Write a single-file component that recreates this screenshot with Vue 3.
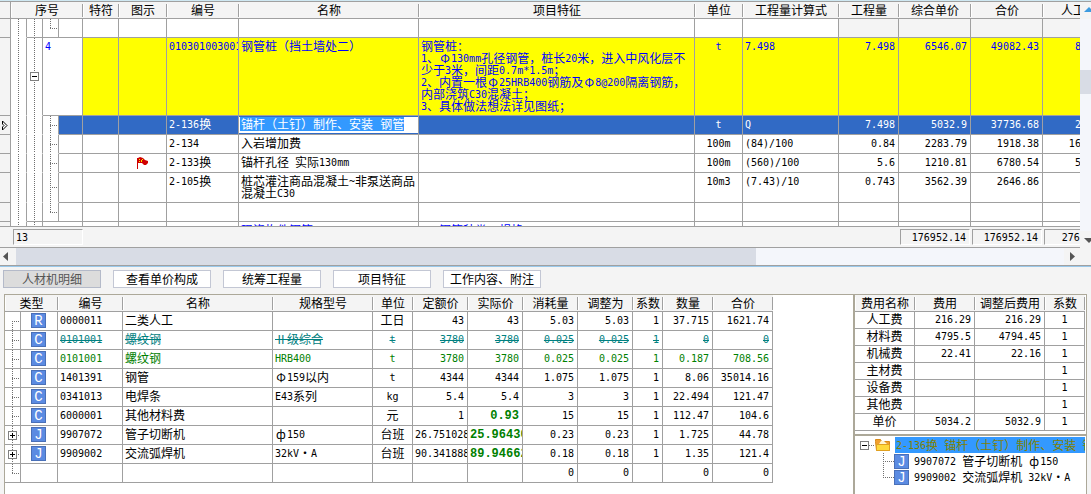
<script setup>
import { h } from 'vue'

/* Latin runs take a half-width face, symbols take a full-width cell. */
const Txt = (props) =>
  (String(props.t).match(/[\x20-\x7e]+|[ΦфⅡ·]|[^\x20-\x7eΦфⅡ·]+/g) || []).map((run) => {
    if (/^[ΦфⅡ·]$/.test(run)) return h('span', { class: 'run-wide' }, run)
    if (/^[\x20-\x7e]/.test(run)) return h('span', { class: 'run-half' }, run)
    return h('span', { class: 'run' }, run)
  })
Txt.props = ['t']

const Badge = (props) => h('span', { class: 'badge' }, props.t)
Badge.props = ['t']

const topCols = [11, 16, 16, 16, 24, 36, 48, 72, 180, 276, 48, 96, 60, 72, 72, 72]
const topHeads = ['特符', '图示', '编号', '名称', '项目特征', '单位', '工程量计算式', '工程量', '综合单价', '合价', '人工费']

const feature = [
  '钢管桩：',
  '1、Φ130mm孔径钢管，桩长20米，进入中风化层不',
  '少于3米，间距0.7m*1.5m；',
  '2、内置一根Φ25HRB400钢筋及Φ8@200隔离钢筋，',
  '内部浇筑C30混凝土；',
  '3、具体做法想法详见图纸；',
]

const rows = [
  { kind: 'blank', branch: 'last', endT2: true, endT3: true, name: [], feat: [] },
  { kind: 'group', no: '4', code: '010301003001', name: ['钢管桩（挡土墙处二）'], feat: feature, unit: 't', calc: '7.498', v: ['7.498', '6546.07', '49082.43', '882.43'] },
  { kind: 'sel', branch: 'mid', code: '2-136换', edit: '锚杆（土钉）制作、安装 钢管', name: [], feat: [], unit: 't', calc: 'Q', v: ['7.498', '5032.9', '37736.68', '216.29'] },
  { branch: 'mid', code: '2-134', name: ['入岩增加费'], feat: [], unit: '100m', calc: '(84)/100', v: ['0.84', '2283.79', '1918.38', '1616.29'] },
  { branch: 'mid', flag: true, code: '2-133换', name: ['锚杆孔径 实际130mm'], feat: [], unit: '100m', calc: '(560)/100', v: ['5.6', '1210.81', '6780.54', '516.29'] },
  { branch: 'mid', code: '2-105换', name: ['桩芯灌注商品混凝土~非泵送商品', '混凝土C30'], feat: [], unit: '10m3', calc: '(7.43)/10', v: ['0.743', '3562.39', '2646.86', ''] },
  { branch: 'last', endT2: true, endT3: true, name: [], feat: [] },
  { kind: 'next', name: ['现浇构件钢筋'], feat: ['1、钢筋种类、规格'] },
]

const tabs = ['人材机明细', '查看单价构成', '统筹工程量', '项目特征', '工作内容、附注']

const resCols = [15, 1, 37, 65, 150, 100, 40, 55, 55, 55, 55, 30, 50, 60]
const resHeads = ['编号', '名称', '规格型号', '单位', '定额价', '实际价', '消耗量', '调整为', '系数', '数量', '合价']
const resources = [
  { b: 'first', k: 'R', code: '0000011', name: '二类人工', spec: '', unit: '工日', v: ['43', '43', '5.03', '5.03', '1', '37.715', '1621.74'] },
  { b: 'mid', k: 'C', code: '0101001', name: '螺纹钢', spec: 'Ⅱ级综合', unit: 't', v: ['3780', '3780', '0.025', '0.025', '1', '0', '0'], cls: 'struck' },
  { b: 'mid', k: 'C', code: '0101001', name: '螺纹钢', spec: 'HRB400', unit: 't', v: ['3780', '3780', '0.025', '0.025', '1', '0.187', '708.56'], cls: 'added' },
  { b: 'mid', k: 'C', code: '1401391', name: '钢管', spec: 'Φ159以内', unit: 't', v: ['4344', '4344', '1.075', '1.075', '1', '8.06', '35014.16'] },
  { b: 'mid', k: 'C', code: '0341013', name: '电焊条', spec: 'E43系列', unit: 'kg', v: ['5.4', '5.4', '3', '3', '1', '22.494', '121.47'] },
  { b: 'mid', k: 'C', code: '6000001', name: '其他材料费', spec: '', unit: '元', v: ['1', '0.93', '15', '15', '1', '112.47', '104.6'], bold: true },
  { b: 'mid', plus: true, k: 'J', code: '9907072', name: '管子切断机', spec: 'ф150', unit: '台班', v: ['26.751028', '25.96430', '0.23', '0.23', '1', '1.725', '44.78'], bold: true },
  { b: 'mid', plus: true, k: 'J', code: '9909002', name: '交流弧焊机', spec: '32kV·A', unit: '台班', v: ['90.341888', '89.94662', '0.18', '0.18', '1', '1.35', '121.4'], bold: true },
  { b: 'last', k: '', code: '', name: '', spec: '', unit: '', v: ['', '', '0', '0', '', '0', '0'] },
]

const fees = [
  ['人工费', '216.29', '216.29', '1'],
  ['材料费', '4795.5', '4794.45', '1'],
  ['机械费', '22.41', '22.16', '1'],
  ['主材费', '', '', '1'],
  ['设备费', '', '', '1'],
  ['其他费', '', '', '1'],
  ['单价', '5034.2', '5032.9', '1'],
]
const machines = ['9907072 管子切断机 ф150', '9909002 交流弧焊机 32kV·A']
</script>

<template>
  <main class="app">
    <section class="upper">
      <div class="upper-main">
        <div class="viewport">
          <table class="grid top">
            <colgroup><col v-for="(w, i) in topCols" :key="i" :style="{ width: w + 'px' }" /></colgroup>
            <thead>
              <tr>
                <th class="corner"></th>
                <th colspan="4">序号</th>
                <th v-for="t in topHeads" :key="t">{{ t }}</th>
              </tr>
            </thead>
            <tbody>
              <tr v-for="(r, i) in rows" :key="i" :class="r.kind">
                <td class="rowhead">
                  <svg v-if="r.kind === 'sel'" width="8" height="11" viewBox="0 0 8 11"><path d="M2.5 1V4L4 5.5L2.5 7V10L7 5.5Z" fill="#fff" stroke="#000" /></svg>
                </td>
                <td class="tree line"></td>
                <td class="tree line" :class="{ end: r.endT2 }">
                  <button v-if="r.kind === 'group'" class="toggle" aria-label="折叠">
                    <svg width="9" height="9"><path d="M2 4.5H7" stroke="#000" /></svg>
                  </button>
                </td>
                <td v-if="r.kind === 'group' || r.kind === 'next'" colspan="2" class="no"><Txt :t="r.no || ''" /></td>
                <template v-else>
                  <td class="tree" :class="[r.branch, { end: r.endT3 }]"></td>
                  <td></td>
                </template>
                <td></td>
                <td class="mark">
                  <svg v-if="r.flag" class="flag" width="12" height="12" viewBox="0 0 12 12"><path d="M0 1H1L3 0L6 1L8 3L11 4V6L9 8H7L5 6L1 6V12H0Z" fill="#d00000" /><path d="M2 2h1v1h-1zM4 4h1v1h-1zM5 2h1v1h-1zM2 4h1v1h-1zM4 3h1v1h-1z" fill="#ffe000" /></svg>
                </td>
                <td><Txt :t="r.code || ''" /></td>
                <td :class="{ editing: r.edit }">
                  <input v-if="r.edit" class="edit" type="text" aria-label="名称" :value="r.edit" />
                  <div v-for="l in r.name" :key="l"><Txt :t="l" /></div>
                </td>
                <td><div v-for="l in r.feat" :key="l"><Txt :t="l" /></div></td>
                <td class="c"><Txt :t="r.unit || ''" /></td>
                <td><Txt :t="r.calc || ''" /></td>
                <td v-for="n in 4" :key="n" class="r"><Txt :t="r.v ? r.v[n - 1] : ''" /></td>
              </tr>
            </tbody>
          </table>
        </div>
        <div class="sums">
          <span class="sunken count"><Txt t="13" /></span>
          <span class="sunken sum"><Txt t="176952.14" /></span>
          <span class="sunken sum"><Txt t="176952.14" /></span>
          <span class="sunken sum"><Txt t="27656.14" /></span>
        </div>
      </div>
      <div class="vscroll">
        <button class="arrow" aria-label="向上滚动"><svg width="11" height="17"><path d="M4 10L9 5L14 10Z" fill="#3c9be0" /></svg></button>
        <div class="vtrack"><div class="vthumb"></div></div>
        <button class="arrow" aria-label="向下滚动"><svg width="11" height="17"><path d="M4 7H14L9 12Z" fill="#555" /></svg></button>
      </div>
    </section>

    <div class="hscroll">
      <button class="arrow" aria-label="向左滚动"><svg width="16" height="17"><path d="M8 4V13L3 8.5Z" fill="#555" /></svg></button>
      <div class="htrack"><div class="hthumb"></div></div>
      <button class="arrow" aria-label="向右滚动"><svg width="16" height="17"><path d="M6 4V13L11 8.5Z" fill="#555" /></svg></button>
      <div class="hcorner"></div>
    </div>

    <nav class="tabs">
      <button v-for="(t, i) in tabs" :key="t" class="tab" :class="{ active: i === 0 }">{{ t }}</button>
    </nav>

    <section class="lower">
      <div class="resources">
        <table class="grid res">
          <colgroup><col v-for="(w, i) in resCols" :key="i" :style="{ width: w + 'px' }" /></colgroup>
          <thead>
            <tr>
              <th colspan="3">类型</th>
              <th v-for="t in resHeads" :key="t">{{ t }}</th>
            </tr>
          </thead>
          <tbody>
            <tr v-for="(r, i) in resources" :key="i" :class="r.cls">
              <td colspan="2" class="tree" :class="r.b">
                <button v-if="r.plus" class="toggle" aria-label="展开">
                  <svg width="9" height="9"><path d="M2 4.5H7M4.5 2V7" stroke="#000" /></svg>
                </button>
              </td>
              <td class="kind"><Badge v-if="r.k" :t="r.k" /></td>
              <td><Txt :t="r.code" /></td>
              <td><Txt :t="r.name" /></td>
              <td><Txt :t="r.spec" /></td>
              <td class="c"><Txt :t="r.unit" /></td>
              <td v-for="(v, n) in r.v" :key="n" class="r" :class="{ changed: r.bold && n === 1 }"><Txt :t="v" /></td>
            </tr>
          </tbody>
        </table>
      </div>

      <aside class="side">
        <div class="fees">
          <table class="grid fee">
            <colgroup><col class="w60" /><col class="w60" /><col class="w70" /><col class="w40" /></colgroup>
            <thead>
              <tr><th>费用名称</th><th>费用</th><th>调整后费用</th><th>系数</th></tr>
            </thead>
            <tbody>
              <tr v-for="f in fees" :key="f[0]">
                <td class="c"><Txt :t="f[0]" /></td>
                <td class="r"><Txt :t="f[1]" /></td>
                <td class="r"><Txt :t="f[2]" /></td>
                <td class="c"><Txt :t="f[3]" /></td>
              </tr>
            </tbody>
          </table>
        </div>
        <ul class="nodes">
          <li class="root">
            <button class="toggle" aria-label="折叠"><svg width="9" height="9"><path d="M2 4.5H7" stroke="#000" /></svg></button>
            <i class="dots"></i>
            <svg class="folder" width="16" height="14" viewBox="0 0 16 14"><path d="M0.5 3.5V1.5H5.5L6.5 3.5H14.5V12.5H1.5Z" fill="#f0a030" stroke="#d88a18" /><path d="M4 6L6 3L9 3L12 6Z" fill="#fff4d0" /><path d="M1.5 12.5V6.5H14.5V12.5Z" fill="#ffd83c" stroke="#e0a020" /></svg>
            <span class="picked"><Txt t="2-136换 锚杆（土钉）制作、安装 钢管" /></span>
          </li>
          <li v-for="(m, i) in machines" :key="m" class="leaf">
            <i class="elbow" :class="{ last: i === 1 }"></i>
            <Badge t="J" />
            <span class="leaf-text"><Txt :t="m" /></span>
          </li>
        </ul>
      </aside>
    </section>
  </main>
</template>

<style>
.run-half {
  font-family: "DejaVu Sans Mono", "Liberation Mono", monospace;
  font-size: 10px;
  line-height: 0;
  vertical-align: 1px;
  white-space: pre;
}
.run-wide {
  display: inline-block;
  width: 12px;
  height: 12px;
  vertical-align: top;
  text-align: center;
}
.changed .run-half {
  font-family: "Liberation Mono", monospace;
  font-size: 12px;
  font-weight: bold;
}
.struck .run,
.struck .run-half,
.struck .run-wide {
  text-decoration: line-through;
}
.badge {
  display: block;
  flex: none;
  box-sizing: border-box;
  width: 15px;
  height: 15px;
  border: 1px solid #4a70b8;
  background: #5b8be2;
  color: #fff;
  font: 14px/14px "Liberation Mono", monospace;
  text-align: center;
}
html,
body {
  height: 100%;
}
</style>

<style scoped>
.app {
  display: flex;
  flex-direction: column;
  box-sizing: border-box;
  min-height: 100vh;
  overflow: hidden;
  background: #f4f4f4;
  color: #000;
  font-family: "Noto Sans CJK SC", sans-serif;
  font-size: 12px;
  line-height: 12px;
}
button {
  padding: 0;
  border: 0;
  background: none;
  font: inherit;
}
svg {
  display: block;
}
.upper {
  display: flex;
  border-top: 1px solid #cfe8f2;
}
.upper-main {
  flex: 1;
  min-width: 0;
  border-top: 1px solid #a0a0a0;
}
.viewport {
  height: 224px;
  overflow: hidden;
  border-bottom: 1px solid #a0a0a0;
  background: #fff;
}
.grid {
  width: 0;
  table-layout: fixed;
  border-collapse: separate;
  border-spacing: 0;
}
th {
  box-sizing: border-box;
  height: 17px;
  padding: 0;
  border-bottom: 1px solid #a0a0a0;
  background:
    linear-gradient(#a0a0a0, #a0a0a0) right center / 1px 13px no-repeat,
    linear-gradient(#fff, #fff) left center / 1px 13px no-repeat,
    #f4f4f4;
  font-weight: normal;
  white-space: nowrap;
  overflow: hidden;
}
th.corner {
  border-right: 1px solid #a0a0a0;
  background: #f4f4f4;
}
td {
  box-sizing: border-box;
  height: 19px;
  padding: 2px 2px 3px;
  border-right: 1px solid #a0a0a0;
  border-bottom: 1px solid #a0a0a0;
  vertical-align: top;
  white-space: nowrap;
  overflow: hidden;
}
.c {
  text-align: center;
}
.r {
  padding-right: 3px;
  text-align: right;
}
.rowhead {
  padding: 0;
  background: #f4f4f4;
  vertical-align: middle;
}
.tree {
  padding: 0;
  vertical-align: middle;
}
.top .tree {
  border-bottom-color: transparent;
}
.top .tree.end {
  border-bottom-color: #a0a0a0;
}
.line {
  background: repeating-linear-gradient(#707070 0 1px, transparent 1px 2px) 7px 0 / 1px 100% no-repeat;
}
.mid {
  background:
    repeating-linear-gradient(#707070 0 1px, transparent 1px 2px) 7px 0 / 1px 100% no-repeat,
    repeating-linear-gradient(90deg, #707070 0 1px, transparent 1px 2px) 7px 50% / 8px 1px no-repeat;
}
.last {
  background:
    repeating-linear-gradient(#707070 0 1px, transparent 1px 2px) 7px 0 / 1px 50% no-repeat,
    repeating-linear-gradient(90deg, #707070 0 1px, transparent 1px 2px) 7px 50% / 8px 1px no-repeat;
}
.first {
  background:
    repeating-linear-gradient(#707070 0 1px, transparent 1px 2px) 7px 100% / 1px 50% no-repeat,
    repeating-linear-gradient(90deg, #707070 0 1px, transparent 1px 2px) 7px 50% / 8px 1px no-repeat;
}
.toggle {
  display: block;
  flex: none;
  box-sizing: border-box;
  width: 9px;
  height: 9px;
  margin-left: 3px;
  outline: 1px solid #808080;
  outline-offset: -1px;
  background: #fff;
}
.blank td:nth-last-child(-n + 4) {
  background: #f4f4f4;
}
.group td {
  background-color: #ff0;
  color: #00f;
}
.group .rowhead {
  background-color: #f4f4f4;
}
.group .tree,
.group .no {
  background-color: #fff;
}
.next {
  color: #00f;
}
.sel td {
  background-color: #316ac5;
  color: #fff;
}
.sel .rowhead {
  background-color: #f4f4f4;
}
.sel .tree {
  background-color: #fff;
}
.sel .editing {
  padding: 1px 0;
}
.edit {
  display: block;
  box-sizing: border-box;
  width: 100%;
  height: 16px;
  padding: 0 2px 2px;
  border: 0;
  background: linear-gradient(#3399ff, #3399ff) 1px 0 / 164px 14px no-repeat #fff;
  color: #fff;
  font: 12px/14px "Liberation Mono", "Noto Sans CJK SC", monospace;
}
.mark {
  padding: 3px 2px;
}
.flag {
  margin: 0 auto;
}
.sums {
  display: flex;
  padding: 2px 0;
  border-bottom: 1px solid #a0a0a0;
  overflow: hidden;
}
.sunken {
  flex: none;
  box-sizing: border-box;
  width: 70px;
  height: 16px;
  margin-right: 2px;
  padding: 1px 3px;
  border: 1px solid #a0a0a0;
  border-right-color: #fff;
  border-bottom-color: #fff;
}
.count {
  margin-left: 13px;
  margin-right: 817px;
  padding-left: 2px;
}
.sum {
  text-align: right;
}
.vscroll {
  display: flex;
  flex-direction: column;
  width: 11px;
  border-top: 1px solid #a0a0a0;
  background: #f4f6fb;
}
.vtrack {
  flex: 1;
  padding-top: 51px;
}
.vthumb {
  height: 24px;
  background: #d8dce5;
}
.arrow {
  flex: none;
  background: #f4f4f4;
}
.hscroll {
  display: flex;
  height: 17px;
  border-bottom: 1px solid #a0a0a0;
  background: #f4f6fb;
}
.htrack {
  flex: 1;
}
.hthumb {
  width: 70.6%;
  height: 17px;
  background: #d8dce5;
}
.hcorner {
  width: 11px;
  background: #f4f4f4;
}
.tabs {
  display: flex;
  gap: 12px;
  padding: 3px 3px 6px;
  border-top: 1px solid #99c8ea;
}
.tab {
  box-sizing: border-box;
  width: 98px;
  height: 18px;
  border: 1px solid #c3c7d4;
  background: #fff;
}
.tab.active {
  border-color: #b4bac9;
  background: #dcdcdc;
  color: #555;
}
.lower {
  flex: 1;
  display: flex;
  padding: 0 4px;
}
.resources {
  flex: 1;
  min-width: 0;
  border: 1px solid #aca899;
  border-width: 1px 0 0 1px;
  background: #fff;
}
.kind {
  padding: 1px 10px;
}
.struck {
  color: #008080;
}
.added,
.changed {
  color: #008000;
}
.side {
  display: flex;
  flex-direction: column;
  width: 231px;
  border: 1px solid #aca899;
  border-width: 1px 1px 0 2px;
  background: #fff;
}
.fees {
  padding-bottom: 3px;
  border-bottom: 2px solid #aca899;
}
.fee td {
  height: 17px;
  padding: 1px 3px 2px;
}
.w60 {
  width: 60px;
}
.w70 {
  width: 70px;
}
.w40 {
  width: 40px;
}
.nodes {
  margin: 0;
  padding: 1px 1px 0 5px;
  list-style: none;
  overflow: hidden;
}
.nodes li {
  display: flex;
  align-items: center;
  height: 16px;
}
.root .toggle {
  margin-left: 0;
}
.dots {
  width: 6px;
  height: 1px;
  background: repeating-linear-gradient(90deg, #707070 0 1px, transparent 1px 2px);
}
.folder {
  flex: none;
  margin-right: 4px;
}
.picked {
  flex: 1;
  padding: 2px 1px;
  overflow: hidden;
  background: #3399ff;
  color: #808000;
  white-space: nowrap;
}
.elbow {
  width: 11px;
  height: 16px;
  margin-left: 23px;
  background:
    repeating-linear-gradient(#707070 0 1px, transparent 1px 2px) 0 0 / 1px 100% no-repeat,
    repeating-linear-gradient(90deg, #707070 0 1px, transparent 1px 2px) 0 50% / 100% 1px no-repeat;
}
.elbow.last {
  background:
    repeating-linear-gradient(#707070 0 1px, transparent 1px 2px) 0 0 / 1px 50% no-repeat,
    repeating-linear-gradient(90deg, #707070 0 1px, transparent 1px 2px) 0 50% / 100% 1px no-repeat;
}
.leaf-text {
  margin-left: 5px;
  white-space: nowrap;
}
</style>
